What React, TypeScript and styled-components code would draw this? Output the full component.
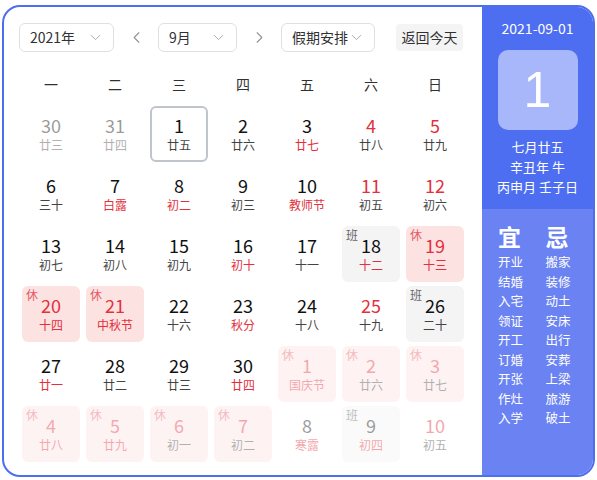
import React from 'react';
import styled, { createGlobalStyle } from 'styled-components';
import { ChevronDown, ChevronLeft, ChevronRight } from 'lucide-react';

const GlobalStyle = createGlobalStyle`
  body {
    margin: 0;
    background: #fff;
    font-family: "Microsoft YaHei", "Noto Sans CJK SC", "Noto Sans", sans-serif;
  }
`;

type Cell = {
  d: number;
  l: string;
  other?: boolean;
  numRed?: boolean;
  lunarRed?: boolean;
  tag?: '休' | '班';
  selected?: boolean;
};

const cells: Cell[] = [
  { d: 30, l: '廿三', other: true },
  { d: 31, l: '廿四', other: true },
  { d: 1, l: '廿五', selected: true },
  { d: 2, l: '廿六' },
  { d: 3, l: '廿七', lunarRed: true },
  { d: 4, l: '廿八', numRed: true },
  { d: 5, l: '廿九', numRed: true },

  { d: 6, l: '三十' },
  { d: 7, l: '白露', lunarRed: true },
  { d: 8, l: '初二', lunarRed: true },
  { d: 9, l: '初三' },
  { d: 10, l: '教师节', lunarRed: true },
  { d: 11, l: '初五', numRed: true },
  { d: 12, l: '初六', numRed: true },

  { d: 13, l: '初七' },
  { d: 14, l: '初八' },
  { d: 15, l: '初九' },
  { d: 16, l: '初十', lunarRed: true },
  { d: 17, l: '十一' },
  { d: 18, l: '十二', lunarRed: true, tag: '班' },
  { d: 19, l: '十三', numRed: true, lunarRed: true, tag: '休' },

  { d: 20, l: '十四', numRed: true, lunarRed: true, tag: '休' },
  { d: 21, l: '中秋节', numRed: true, lunarRed: true, tag: '休' },
  { d: 22, l: '十六' },
  { d: 23, l: '秋分', lunarRed: true },
  { d: 24, l: '十八' },
  { d: 25, l: '十九', numRed: true },
  { d: 26, l: '二十', tag: '班' },

  { d: 27, l: '廿一', lunarRed: true },
  { d: 28, l: '廿二' },
  { d: 29, l: '廿三' },
  { d: 30, l: '廿四', lunarRed: true },
  { d: 1, l: '国庆节', other: true, numRed: true, lunarRed: true, tag: '休' },
  { d: 2, l: '廿六', other: true, numRed: true, tag: '休' },
  { d: 3, l: '廿七', other: true, numRed: true, tag: '休' },

  { d: 4, l: '廿八', other: true, numRed: true, lunarRed: true, tag: '休' },
  { d: 5, l: '廿九', other: true, numRed: true, lunarRed: true, tag: '休' },
  { d: 6, l: '初一', other: true, numRed: true, tag: '休' },
  { d: 7, l: '初二', other: true, numRed: true, tag: '休' },
  { d: 8, l: '寒露', other: true, lunarRed: true },
  { d: 9, l: '初四', other: true, lunarRed: true, tag: '班' },
  { d: 10, l: '初五', other: true, numRed: true },
];

const weekdays = ['一', '二', '三', '四', '五', '六', '日'];
const yi = ['开业', '结婚', '入宅', '领证', '开工', '订婚', '开张', '作灶', '入学'];
const ji = ['搬家', '装修', '动土', '安床', '出行', '安葬', '上梁', '旅游', '破土'];

const RED = '#e3303c';

const Frame = styled.div`
  margin: 5px 2px 0 2px;
  width: 593px;
  height: 472px;
  box-sizing: border-box;
  border: 2px solid #4e6ef2;
  border-radius: 18px;
  overflow: hidden;
  display: flex;
  background: #fff;
`;

const Main = styled.div`
  flex: 1;
  padding: 15px 15px 0 15px;
`;

const Toolbar = styled.div`
  display: flex;
  align-items: center;
  height: 30px;
`;

const Select = styled.div<{ w: number }>`
  width: ${(p) => p.w}px;
  height: 29px;
  box-sizing: border-box;
  border: 1px solid #dcdfe6;
  border-radius: 6px;
  display: flex;
  align-items: center;
  justify-content: space-between;
  padding: 0 9px 0 10px;
  font-size: 14px;
  color: #303133;
  svg {
    color: #a8abb2;
  }
`;

const Arrow = styled.div`
  width: 44px;
  display: flex;
  justify-content: center;
  color: #909399;
`;

const TodayButton = styled.div`
  margin-left: 21px;
  width: 67px;
  height: 27px;
  border-radius: 4px;
  background: #f4f4f5;
  display: flex;
  align-items: center;
  justify-content: center;
  font-size: 14px;
  color: #303133;
`;

const WeekRow = styled.div`
  margin-top: 18px;
  display: grid;
  grid-template-columns: repeat(7, 64px);
  height: 28px;
`;

const WeekDay = styled.div`
  display: flex;
  align-items: center;
  justify-content: center;
  font-size: 14px;
  color: #303133;
`;

const Grid = styled.div`
  margin-top: 8px;
  display: grid;
  grid-template-columns: repeat(7, 58px);
  grid-auto-rows: 56px;
  column-gap: 6px;
  row-gap: 4px;
  padding-left: 3px;
`;

const DayCell = styled.div<{ tag?: string; selected?: boolean; other?: boolean }>`
  position: relative;
  box-sizing: border-box;
  border-radius: 6px;
  display: flex;
  flex-direction: column;
  align-items: center;
  padding-top: ${(p) => (p.selected ? 7 : 9)}px;
  background: ${(p) => (p.tag === '休' ? '#fde2e2' : p.tag === '班' ? '#f4f4f5' : '#fff')};
  border: ${(p) => (p.selected ? '2px solid #c0c4cc' : 'none')};
  opacity: ${(p) => (p.other ? 0.42 : 1)};
`;

const Num = styled.div<{ red?: boolean }>`
  font-size: 18px;
  line-height: 20px;
  color: ${(p) => (p.red ? RED : '#111')};
`;

const Lunar = styled.div<{ red?: boolean }>`
  margin-top: 3px;
  font-size: 12px;
  line-height: 14px;
  color: ${(p) => (p.red ? RED : '#444')};
`;

const Tag = styled.span<{ kind: string }>`
  position: absolute;
  left: 4px;
  top: 2px;
  font-size: 12px;
  line-height: 14px;
  color: ${(p) => (p.kind === '休' ? '#e25a62' : '#666')};
`;

const Side = styled.div`
  width: 111px;
  display: flex;
  flex-direction: column;
  color: #fff;
`;

const SideTop = styled.div`
  background: #4e6ef2;
  padding: 11px 0 12px;
  display: flex;
  flex-direction: column;
  align-items: center;
`;

const DateText = styled.div`
  font-size: 14px;
  line-height: 20px;
`;

const BigDay = styled.div`
  margin-top: 12px;
  width: 80px;
  height: 80px;
  border-radius: 10px;
  background: rgba(255, 255, 255, 0.5);
  display: flex;
  align-items: center;
  justify-content: center;
  font-size: 50px;
  font-family: "Liberation Sans", Arial, sans-serif;
`;

const LunarInfo = styled.div`
  margin-top: 7px;
  font-size: 13px;
  line-height: 20px;
  text-align: center;
`;

const SideBottom = styled.div`
  flex: 1;
  background: #6b83f2;
  padding: 16px 0 0 16px;
  display: flex;
`;

const Column = styled.div`
  width: 55px;
  display: flex;
  flex-direction: column;
`;

const ColTitle = styled.div`
  font-size: 23px;
  line-height: 22px;
  font-weight: bold;
  margin-bottom: 5px;
`;

const ColItem = styled.div`
  font-size: 12.5px;
  line-height: 19.5px;
`;

export default function App() {
  return (
    <>
      <GlobalStyle />
      <Frame>
        <Main>
          <Toolbar>
            <Select w={95}>
              2021年 <ChevronDown size={17} strokeWidth={1.4} />
            </Select>
            <Arrow>
              <ChevronLeft size={19} strokeWidth={1.4} />
            </Arrow>
            <Select w={79}>
              9月 <ChevronDown size={17} strokeWidth={1.4} />
            </Select>
            <Arrow>
              <ChevronRight size={19} strokeWidth={1.4} />
            </Arrow>
            <Select w={94}>
              假期安排 <ChevronDown size={17} strokeWidth={1.4} />
            </Select>
            <TodayButton>返回今天</TodayButton>
          </Toolbar>
          <WeekRow>
            {weekdays.map((w) => (
              <WeekDay key={w}>{w}</WeekDay>
            ))}
          </WeekRow>
          <Grid>
            {cells.map((c, i) => (
              <DayCell key={i} tag={c.tag} selected={c.selected} other={c.other}>
                {c.tag && <Tag kind={c.tag}>{c.tag}</Tag>}
                <Num red={c.numRed}>{c.d}</Num>
                <Lunar red={c.lunarRed}>{c.l}</Lunar>
              </DayCell>
            ))}
          </Grid>
        </Main>
        <Side>
          <SideTop>
            <DateText>2021-09-01</DateText>
            <BigDay>1</BigDay>
            <LunarInfo>
              七月廿五
              <br />
              辛丑年 牛
              <br />
              丙申月 壬子日
            </LunarInfo>
          </SideTop>
          <SideBottom>
            <Column>
              <ColTitle>宜</ColTitle>
              {yi.map((t) => (
                <ColItem key={t}>{t}</ColItem>
              ))}
            </Column>
            <Column>
              <ColTitle>忌</ColTitle>
              {ji.map((t) => (
                <ColItem key={t}>{t}</ColItem>
              ))}
            </Column>
          </SideBottom>
        </Side>
      </Frame>
    </>
  );
}
